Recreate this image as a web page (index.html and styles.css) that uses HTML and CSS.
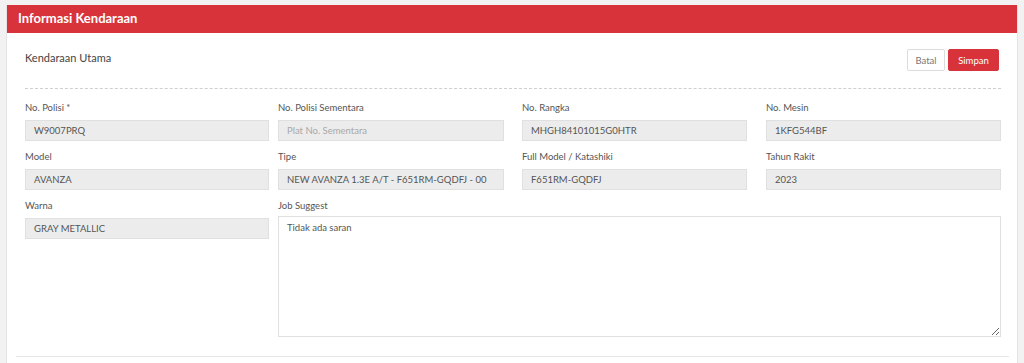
FILE: index.html
```html
<!DOCTYPE html>
<html lang="id">
<head>
  <meta charset="UTF-8">
  <meta name="viewport" content="width=device-width, initial-scale=1.0">
  <title>Informasi Kendaraan</title>
  <link rel="stylesheet" href="styles.css">
</head>
<body>

  <div class="card">
    <div class="card-header">Informasi Kendaraan</div>

    <div class="card-body">
      <div class="section-head">
        <span class="section-title">Kendaraan Utama</span>
        <div class="actions">
          <button type="button" class="btn btn-light">Batal</button>
          <button type="button" class="btn btn-red">Simpan</button>
        </div>
      </div>

      <form class="form-grid">
        <div class="field c1">
          <label for="noPolisi">No. Polisi *</label>
          <input type="text" id="noPolisi" value="W9007PRQ" readonly>
        </div>
        <div class="field c2">
          <label for="noPolisiSementara">No. Polisi Sementara</label>
          <input type="text" id="noPolisiSementara" placeholder="Plat No. Sementara" readonly>
        </div>
        <div class="field c3">
          <label for="noRangka">No. Rangka</label>
          <input type="text" id="noRangka" value="MHGH84101015G0HTR" readonly>
        </div>
        <div class="field">
          <label for="noMesin">No. Mesin</label>
          <input type="text" id="noMesin" value="1KFG544BF" readonly>
        </div>

        <div class="field c1">
          <label for="model">Model</label>
          <input type="text" id="model" value="AVANZA" readonly>
        </div>
        <div class="field c2">
          <label for="tipe">Tipe</label>
          <input type="text" id="tipe" value="NEW AVANZA 1.3E A/T - F651RM-GQDFJ - 00" readonly>
        </div>
        <div class="field c3">
          <label for="katashiki">Full Model / Katashiki</label>
          <input type="text" id="katashiki" value="F651RM-GQDFJ" readonly>
        </div>
        <div class="field">
          <label for="tahunRakit">Tahun Rakit</label>
          <input type="text" id="tahunRakit" value="2023" readonly>
        </div>

        <div class="field c1">
          <label for="warna">Warna</label>
          <input type="text" id="warna" value="GRAY METALLIC" readonly>
        </div>
        <div class="field wide">
          <label for="jobSuggest">Job Suggest</label>
          <textarea id="jobSuggest">Tidak ada saran</textarea>
        </div>
      </form>
    </div>

    <div class="card-footer"></div>
  </div>

</body>
</html>
```

FILE: styles.css
```css
body {
  font-family: 'Lato', sans-serif;
  background-color: #f2f2f2;
  margin: 0;
  padding: 5px 6px 0 6px;
}

.card {
  width: 1012px;
  background-color: #fff;
  border-left: 1px solid #e4e4e4;
  border-right: 1px solid #e4e4e4;
  box-sizing: border-box;
  height: 358px;
}

.card-header {
  background-color: #d8333b;
  color: white;
  font-weight: bold;
  font-size: 13px;
  height: 28px;
  line-height: 27px;
  padding-left: 11px;
}

.card-body {
  padding: 16px 16px 0 18px;
}

.section-head {
  display: flex;
  justify-content: space-between;
  align-items: flex-start;
  padding-bottom: 17px;
  border-bottom: 1px dashed #cfcfcf;
}

.section-title {
  font-size: 11px;
  color: #444;
  margin-top: 2px;
}

.actions {
  display: flex;
  gap: 3px;
  margin-right: 2px;
}

.btn {
  font-family: 'Lato', sans-serif;
  font-size: 9.5px;
  height: 22px;
  border-radius: 2px;
  cursor: pointer;
  padding: 0;
}

.btn-light {
  background-color: #fff;
  border: 1px solid #dcdcdc;
  color: #777;
  width: 38px;
}

.btn-red {
  background-color: #d8333b;
  border: 1px solid #d8333b;
  color: white;
  width: 51px;
}

.form-grid {
  display: grid;
  grid-template-columns: 253px 244px 244px 1fr;
  row-gap: 9px;
  margin-top: 12px;
}

.field {
  display: flex;
  flex-direction: column;
}

.c1 { padding-right: 9px; }
.c2 { padding-right: 18px; }
.c3 { padding-right: 19px; }

.wide {
  grid-column: 2 / 5;
}

label {
  font-size: 9.5px;
  color: #555;
  line-height: 14px;
  margin-bottom: 5px;
}

input, textarea {
  font-family: 'Lato', sans-serif;
  font-size: 9.5px;
  color: #555;
  background-color: #ececec;
  border: 1px solid #e0e0e0;
  border-radius: 0;
  height: 21px;
  padding: 0 8px;
  box-sizing: border-box;
  outline: none;
}

input::placeholder {
  color: #a8a8a8;
}

textarea {
  background-color: #fff;
  height: 121px;
  margin-top: -2px;
  padding: 5px 8px;
  resize: vertical;
}

.card-footer {
  margin: 19px 8px 0 9px;
  border-top: 1px solid #e6e6e6;
}
```
